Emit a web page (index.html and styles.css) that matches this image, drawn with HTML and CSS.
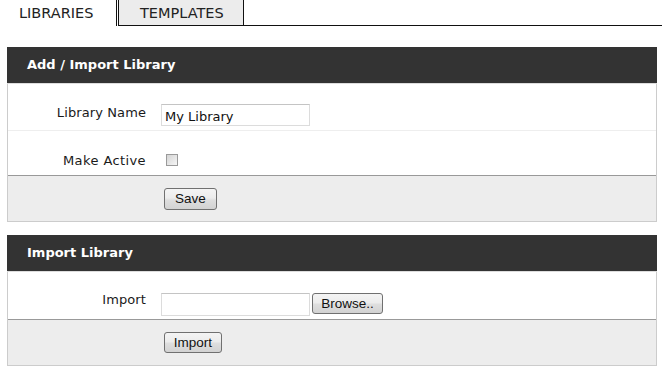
FILE: index.html
```html
<!DOCTYPE html>
<html>
<head>
<meta charset="utf-8">
<link rel="stylesheet" href="styles.css">
</head>
<body>
<div class="tabs">
  <div class="tab active">LIBRARIES</div>
  <div class="tab">TEMPLATES</div>
  <div class="tab-fill"></div>
</div>

<div class="panel first">
  <div class="panel-head">Add / Import Library</div>
  <div class="row r-name">
    <label class="label">Library Name</label>
    <div class="field"><input class="text" type="text" value="My Library"></div>
  </div>
  <div class="row r-active last">
    <label class="label">Make Active</label>
    <div class="field"><span class="check"></span></div>
  </div>
  <div class="foot"><button class="btn save">Save</button></div>
</div>

<div class="panel">
  <div class="panel-head">Import Library</div>
  <div class="row r-import last">
    <label class="label">Import</label>
    <div class="field"><span class="text file-box"></span><button class="btn browse">Browse..</button></div>
  </div>
  <div class="foot"><button class="btn import">Import</button></div>
</div>
</body>
</html>
```

FILE: styles.css
```css
html, body {
  margin: 0;
  padding: 0;
  background: #fff;
}
body {
  font-family: "DejaVu Sans", Verdana, sans-serif;
  font-size: 13px;
  color: #222;
}
.tabs {
  display: flex;
  height: 26px;
}
.tab {
  box-sizing: border-box;
  height: 26px;
  font-size: 14.5px;
  line-height: 26px;
  color: #222;
}
.tab.active {
  width: 117px;
  padding-left: 19px;
  border-right: 1px solid #111;
}
.tab:not(.active) {
  margin-left: 1px;
  width: 126px;
  padding-left: 21px;
  background: #ececec;
  border-left: 1px solid #111;
  border-right: 1px solid #111;
  border-bottom: 1px solid #111;
}
.tab-fill {
  flex: 1;
  border-bottom: 1px solid #111;
}
.panel {
  margin: 13px 5px 0 7px;
  border-left: 1px solid #ccc;
  border-right: 1px solid #ccc;
  border-bottom: 1px solid #ccc;
}
.panel.first {
  margin-top: 21px;
}
.panel-head {
  margin: 0 -1px;
  height: 36px;
  line-height: 36px;
  padding-left: 20px;
  background: #333;
  color: #fff;
  font-weight: bold;
  font-size: 13px;
  border-bottom: 1px solid #ddd;
}
.row {
  box-sizing: border-box;
  display: flex;
  align-items: flex-start;
  border-bottom: 1px solid #eee;
}
.row.last {
  border-bottom: 1px solid #999;
}
.r-name { height: 47px; padding-top: 20px; }
.r-name .label { margin-top: 1px; }
.r-active { height: 45px; padding-top: 22px; }
.r-active .check { margin-top: 1px; }
.r-active .label { letter-spacing: 0.4px; }
.r-import { height: 48px; padding-top: 21px; }
.r-import .label { margin-top: -1px; }
.label {
  width: 138px;
  text-align: right;
  padding-right: 15px;
  line-height: 16px;
  letter-spacing: 0.1px;
  color: #1a1a1a;
  box-sizing: content-box;
}
.field {
  display: flex;
  align-items: flex-start;
}
.text {
  box-sizing: border-box;
  width: 149px;
  height: 22px;
  border: 1px solid #dcdcdc;
  border-top-color: #c4c4c4;
  font-family: "DejaVu Sans", Verdana, sans-serif;
  font-size: 13px;
  padding: 2px 3px 0;
  color: #111;
  margin: 0;
  outline: none;
}
.check {
  display: block;
  box-sizing: border-box;
  width: 12px;
  height: 12px;
  margin-left: 5px;
  border: 1px solid #9a9a9a;
  background: linear-gradient(135deg, #d4d4d4, #f6f6f6);
}
.file-box { display: block; height: 23px; }
.btn {
  box-sizing: border-box;
  height: 22px;
  padding: 0;
  border: 1px solid #707070;
  border-radius: 3px;
  background: linear-gradient(#f4f4f4, #ececec 45%, #dedede 55%, #d2d2d2);
  font-family: "Liberation Sans", Arial, sans-serif;
  font-size: 13.5px;
  color: #111;
  margin: 0;
  text-align: center;
}
.browse {
  margin-left: 2px;
  width: 71px;
  height: 21px;
}
.save { width: 53px; }
.import { width: 58px; height: 21px; }
.foot {
  height: 45px;
  background: #ededed;
  display: flex;
  align-items: center;
  padding-left: 156px;
}
```
